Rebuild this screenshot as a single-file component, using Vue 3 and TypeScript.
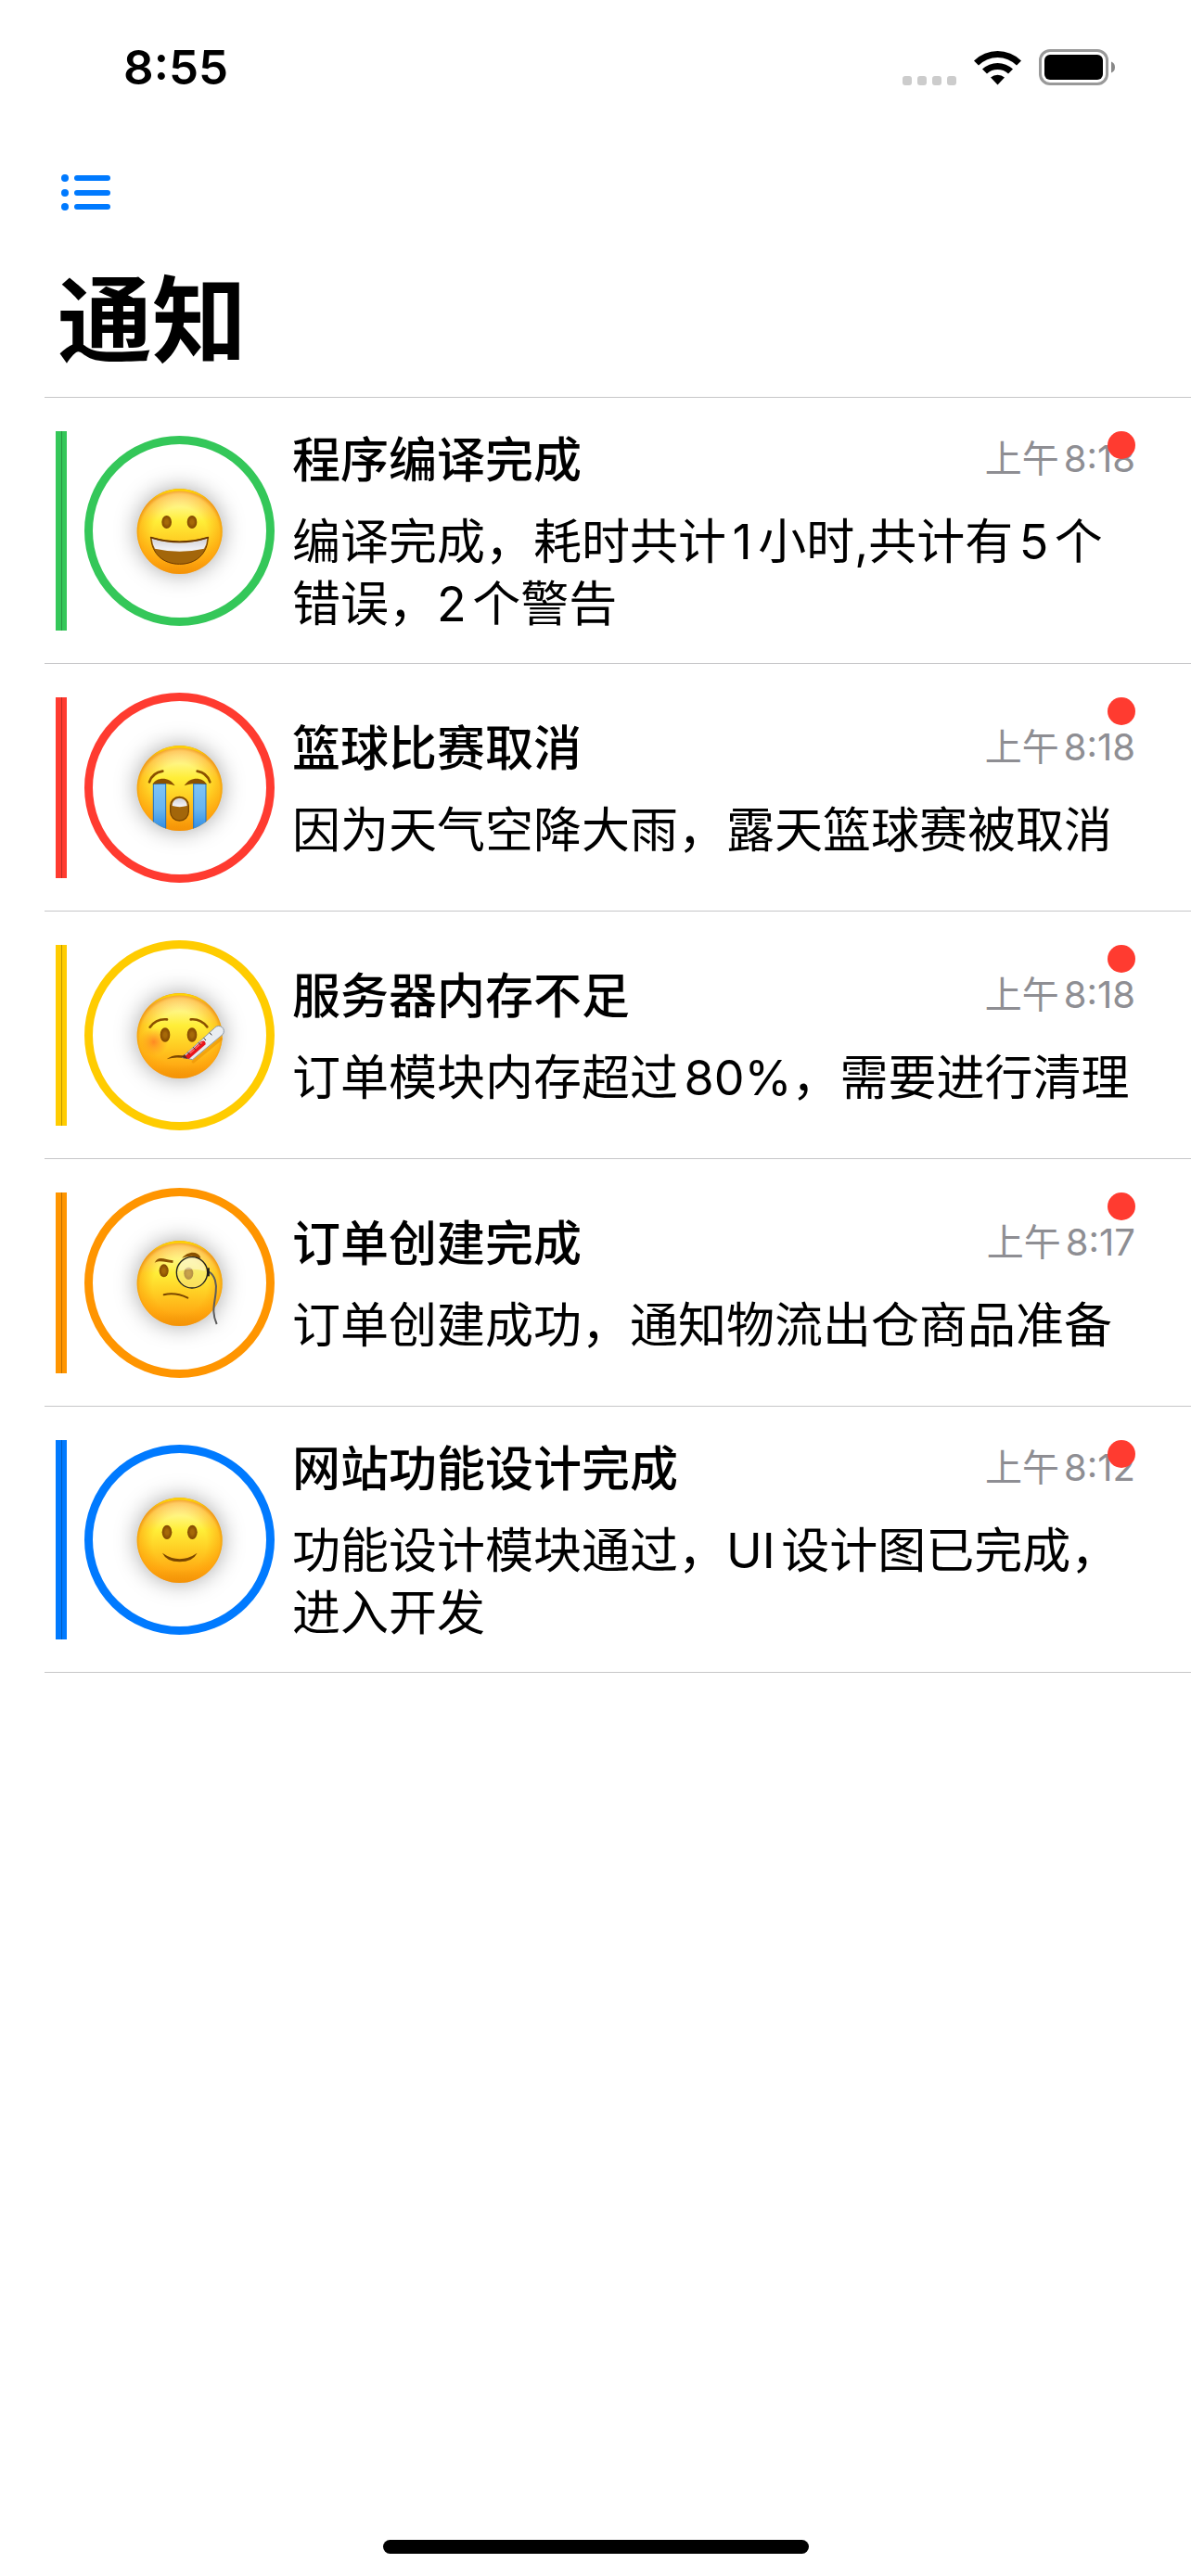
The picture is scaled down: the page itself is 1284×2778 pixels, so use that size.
<script setup lang="ts">
type Mood = 'grin' | 'cry' | 'sick' | 'monocle' | 'smile'

interface Notice {
  id: number
  mood: Mood
  color: string
  title: string
  body: string
  time: string
}

const notices: Notice[] = [
  { id: 1, mood: 'grin', color: '#34c759', title: '程序编译完成', body: '编译完成，耗时共计1小时,共计有5个错误，2个警告', time: '8:18' },
  { id: 2, mood: 'cry', color: '#ff3b30', title: '篮球比赛取消', body: '因为天气空降大雨，露天篮球赛被取消', time: '8:18' },
  { id: 3, mood: 'sick', color: '#ffcc00', title: '服务器内存不足', body: '订单模块内存超过80%，需要进行清理', time: '8:18' },
  { id: 4, mood: 'monocle', color: '#ff9500', title: '订单创建完成', body: '订单创建成功，通知物流出仓商品准备', time: '8:17' },
  { id: 5, mood: 'smile', color: '#007aff', title: '网站功能设计完成', body: '功能设计模块通过，UI设计图已完成，进入开发', time: '8:12' },
]
</script>

<template>
  <div class="screen">
    <svg class="defs" aria-hidden="true">
      <defs>
        <linearGradient id="skin" x1="0" y1="0" x2="0" y2="1">
          <stop offset="0" stop-color="#fffbd0" />
          <stop offset="0.12" stop-color="#fff9a8" />
          <stop offset="0.38" stop-color="#ffee38" />
          <stop offset="0.6" stop-color="#ffcf24" />
          <stop offset="0.84" stop-color="#ffac14" />
          <stop offset="1" stop-color="#ec8c06" />
        </linearGradient>
        <radialGradient id="rim" cx="0.5" cy="0.53" r="0.53">
          <stop offset="0.6" stop-color="#ff9d00" stop-opacity="0" />
          <stop offset="0.88" stop-color="#fd9a08" stop-opacity="0.5" />
          <stop offset="1" stop-color="#e57a00" stop-opacity="0.95" />
        </radialGradient>
        <linearGradient id="top" x1="0" y1="0" x2="0" y2="1">
          <stop offset="0" stop-color="#ffdb00" />
          <stop offset="1" stop-color="#ffdb00" stop-opacity="0" />
        </linearGradient>
        <radialGradient id="eye">
          <stop offset="0.3" stop-color="#a66908" />
          <stop offset="1" stop-color="#804600" />
        </radialGradient>
        <linearGradient id="tear" x1="0" y1="0" x2="0" y2="1">
          <stop offset="0" stop-color="#7fc4f6" />
          <stop offset="0.5" stop-color="#67b5f1" />
          <stop offset="1" stop-color="#2484e0" />
        </linearGradient>
        <linearGradient id="teeth" x1="0" y1="0" x2="0" y2="1">
          <stop offset="0" stop-color="#d2d2d8" />
          <stop offset="1" stop-color="#f7f7fa" />
        </linearGradient>
        <radialGradient id="blush">
          <stop offset="0" stop-color="#ff7d22" stop-opacity="0.85" />
          <stop offset="1" stop-color="#ff8f22" stop-opacity="0" />
        </radialGradient>
        <clipPath id="disc"><circle r="138" /></clipPath>
      </defs>
    </svg>

    <header class="status">
      <span class="clock">8:55</span>
      <span class="indicators">
        <span class="cell"><i></i><i></i><i></i><i></i></span>
        <svg class="wifi" viewBox="0 0 51 38" aria-hidden="true">
          <path d="M0 11.5A36.500 36.500 0 0 1 51 11.500L46 16.500A29 29 0 0 0 5 16.500Z" />
          <path d="M9 20.500A24 24 0 0 1 42 20.500L37 25.500A17 17 0 0 0 14 25.500Z" />
          <path d="M18 29.500A11.500 11.500 0 0 1 33 29.500L25.500 37.500Z" />
        </svg>
        <svg class="battery" viewBox="0 0 82 39" aria-hidden="true">
          <rect x="1.500" y="1.500" width="72" height="36" rx="10.500" fill="none" stroke="#999" stroke-width="3" />
          <rect x="6" y="6" width="63" height="27" rx="6" />
          <path d="M78 13.500Q82 15 82 19.500T78 25.500Z" fill="#888" />
        </svg>
      </span>
    </header>

    <nav class="toolbar">
      <button class="menu" type="button" aria-label="列表">
        <svg viewBox="0 0 54 40" aria-hidden="true">
          <g fill="currentColor">
            <circle cx="4" cy="4" r="4" /><circle cx="4" cy="20" r="4" /><circle cx="4" cy="35" r="4" />
            <rect x="14" y="1" width="39" height="6" rx="3" />
            <rect x="14" y="17" width="39" height="6" rx="3" />
            <rect x="14" y="32" width="39" height="6" rx="3" />
          </g>
        </svg>
      </button>
    </nav>

    <h1>通知</h1>

    <ul class="list">
      <li v-for="n in notices" :key="n.id" class="row" :style="{ '--accent': n.color }">
        <span class="bar"></span>
        <span class="ring">
          <svg class="face" viewBox="-194 -195 390 390" aria-hidden="true">
            <circle r="138" fill="url(#skin)" />
            <g v-if="n.mood === 'sick'"><circle cx="-84" cy="20" r="46" fill="url(#blush)" /></g>
            <circle r="138" fill="url(#rim)" />
            <path d="M-112 -80A138 138 0 0 1 112 -80A150 150 0 0 0 -112 -80Z" fill="url(#top)" />

            <g v-if="n.mood === 'grin'">
              <ellipse cx="-42" cy="-30" rx="16" ry="21" fill="url(#eye)" />
              <ellipse cx="40" cy="-30" rx="16" ry="21" fill="url(#eye)" />
              <path d="M-93 20Q0 48 92 20C90 72 54 106 0 106S-90 72 -93 20Z" fill="#a3660a" stroke="#6b3800" stroke-width="3" />
              <path d="M-90 23Q0 51 89 23Q88 42 79 56Q0 74 -80 56Q-88 42 -90 23Z" fill="url(#teeth)" />
              <path d="M-93 20Q0 48 92 20" fill="none" stroke="#6b3800" stroke-width="5" stroke-linecap="round" />
            </g>

            <g v-else-if="n.mood === 'cry'">
              <g clip-path="url(#disc)" fill="url(#tear)" stroke="#1c6fc4" stroke-width="3">
                <rect x="-85" y="-14" width="40" height="160" />
                <rect x="45" y="-14" width="40" height="160" />
              </g>
              <g fill="none" stroke="#8a5000" stroke-width="8" stroke-linecap="round">
                <path d="M-98 -20Q-88 -50 -55 -55" />
                <path d="M98 -20Q88 -50 57 -55" />
              </g>
              <g fill="#8a5000">
                <path d="M-87 -13C-74 -36 -34 -38 -15 -8C-36 -16 -64 -16 -87 -13Z" />
                <path d="M87 -13C74 -36 34 -38 15 -8C36 -16 64 -16 87 -13Z" />
              </g>
              <rect x="-30" y="28" width="59" height="77" rx="29" fill="#a3660a" stroke="#7a4600" stroke-width="4" />
              <path d="M-24 57C-24 25 24 25 24 57Q0 64 -24 57Z" fill="url(#teeth)" />
            </g>

            <g v-else-if="n.mood === 'sick'">
              <g fill="none" stroke="#8a5000" stroke-width="8" stroke-linecap="round">
                <path d="M-96 -28Q-76 -56 -41 -53" />
                <path d="M36 -53Q68 -56 89 -29" />
              </g>
              <ellipse cx="-47" cy="-3" rx="16" ry="23" fill="url(#eye)" />
              <ellipse cx="40" cy="-3" rx="16" ry="23" fill="url(#eye)" />
              <path d="M-42 76Q-18 56 20 66L20 74Q-12 66 -42 76Z" fill="#7a4600" />
              <path d="M44 84L134 10" stroke="#e88a00" stroke-width="10" stroke-linecap="round" opacity="0.5" />
              <path d="M8 70L114 -26A15 15 0 0 1 139 -4L42 77Z" fill="#e9edf2" stroke="#8b97a6" stroke-width="3" />
              <path d="M13 70L70 18Q84 12 84 28L30 75Z" fill="#e8141c" />
              <path d="M34 56L72 22" stroke="#ff6a6a" stroke-width="4" stroke-linecap="round" />
              <path d="M6 69L16 60L26 75Z" fill="#5f2a1c" />
              <path d="M26 53L33 61M44 37L51 45M61 22L68 30M78 7L85 15M97 -10L104 -2" stroke="#333" stroke-width="3" />
            </g>

            <g v-else-if="n.mood === 'monocle'">
              <g fill="#8a5000">
                <path d="M-81 -67C-68 -92 -48 -76 -21 -74L-22 -66C-46 -68 -62 -76 -81 -67Z" />
                <path d="M8 -82C24 -102 56 -108 68 -84L62 -78C48 -92 30 -88 8 -82Z" />
              </g>
              <ellipse cx="-51" cy="-41" rx="15" ry="21" fill="url(#eye)" />
              <ellipse cx="29" cy="-32" rx="15" ry="20" fill="url(#eye)" />
              <circle cx="40" cy="-35" r="50" fill="#f4e89c" fill-opacity="0.45" stroke="#1f1f1f" stroke-width="4" />
              <path d="M-3 -40A43 43 0 0 1 83 -40Q40 -52 -3 -40Z" fill="#fff" fill-opacity="0.4" />
              <path d="M-51 37Q-14 28 26 47" fill="none" stroke="#7a4600" stroke-width="6" stroke-linecap="round" />
              <path d="M93 -38C116 -28 120 6 117 28C113 70 102 90 120 132" fill="none" stroke="#5c5c5c" stroke-width="6" />
              <path d="M93 -50L93 -23" stroke="#1a1a1a" stroke-width="7" />
            </g>

            <g v-else>
              <ellipse cx="-41" cy="-26" rx="16" ry="23" fill="url(#eye)" />
              <ellipse cx="41" cy="-26" rx="16" ry="23" fill="url(#eye)" />
              <path d="M-56 41Q0 80 57 41Q42 70 0 70T-56 41Z" fill="#7a4600" />
            </g>
          </svg>
        </span>
        <div class="text">
          <div class="head">
            <h2>{{ n.title }}</h2>
            <time :datetime="'0' + n.time">上午{{ n.time }}</time>
          </div>
          <p>{{ n.body }}</p>
        </div>
        <span class="unread"></span>
      </li>
    </ul>

    <div class="home"></div>
  </div>
</template>

<style>
body {
  margin: 0;
  background: #fff;
}
</style>

<style scoped>
.screen {
  box-sizing: border-box;
  display: flex;
  flex-direction: column;
  min-height: 100vh;
  color: #000;
  background: #fff;
  font-family: Inter, "Noto Sans CJK SC", sans-serif;
  text-autospace: normal;
}

.defs {
  position: absolute;
  width: 0;
  height: 0;
}

.status {
  display: flex;
  justify-content: space-between;
  align-items: center;
  height: 144px;
  padding: 0 82px 0 133px;
}

.clock {
  font-size: 51px;
  font-weight: 600;
}

.indicators {
  display: flex;
  align-items: flex-end;
  gap: 19px;
}

.cell {
  display: flex;
  gap: 6px;
}

.cell i {
  width: 10px;
  height: 10px;
  border-radius: 3px;
  background: #ccc;
}

.wifi {
  width: 51px;
  height: 38px;
}

.battery {
  width: 82px;
  height: 39px;
}

.toolbar {
  display: flex;
  align-items: center;
  height: 128px;
  padding: 0 66px;
}

.menu {
  display: flex;
  padding: 0;
  border: 0;
  background: none;
  color: #007aff;
}

.menu svg {
  width: 54px;
  height: 40px;
}

h1 {
  margin: 0;
  padding: 0 62px 8px;
  font-size: 102px;
  font-weight: 700;
  line-height: 148px;
}

.list {
  margin: 0 0 0 48px;
  padding: 0;
  border-top: 1px solid #c6c6c8;
  list-style: none;
}

.row {
  position: relative;
  display: flex;
  gap: 24px;
  padding: 36px 60px 35px 12px;
  border-bottom: 1px solid #c6c6c8;
}

.bar {
  flex: none;
  width: 12px;
  background: linear-gradient(90deg, transparent 6px, rgba(0, 0, 0, 0.25) 6px 7px, transparent 7px) var(--accent);
}

.ring {
  flex: none;
  align-self: center;
  display: grid;
  place-items: center;
  box-sizing: border-box;
  width: 205px;
  height: 205px;
  margin: -5px;
  border: 9px solid var(--accent);
  border-radius: 50%;
}

.face {
  width: 130px;
  height: 130px;
  overflow: visible;
  filter: drop-shadow(0 0 12px rgba(0, 0, 0, 0.35));
}

.text {
  flex: 1;
  display: flex;
  flex-direction: column;
  justify-content: center;
  gap: 21px;
  min-width: 0;
  margin: -2px 0 -5px;
}

.head {
  display: flex;
  justify-content: space-between;
  align-items: flex-start;
}

h2,
p {
  margin: 0;
  font-size: 52px;
  font-weight: 400;
  line-height: 67px;
}

h2 {
  font-weight: 500;
}

time {
  color: #8e8e93;
  font-size: 40px;
  line-height: 64px;
  white-space: nowrap;
}

.unread {
  position: absolute;
  top: 36px;
  right: 60px;
  width: 30px;
  height: 30px;
  border-radius: 50%;
  background: #ff3b30;
}

.home {
  width: 36%;
  max-width: 459px;
  height: 15px;
  margin: auto auto 24px;
  border-radius: 8px;
  background: #000;
}
</style>
